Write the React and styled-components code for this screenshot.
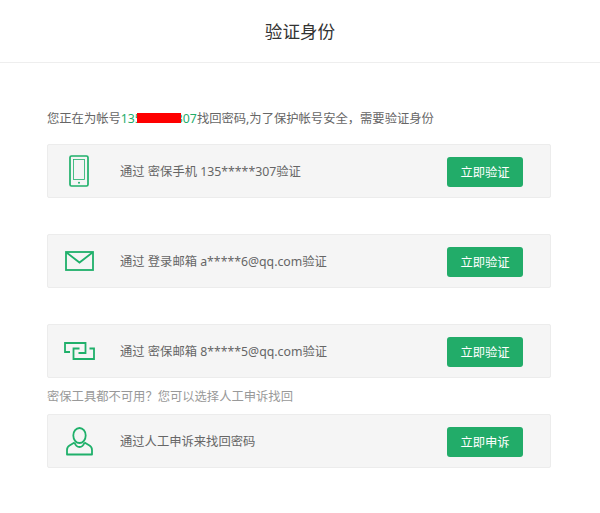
import React from 'react'
import styled, { createGlobalStyle } from 'styled-components'

const GREEN = '#22ac69'
const ICON_GREEN = '#1fb06a'

const GlobalStyle = createGlobalStyle`
  html, body {
    margin: 0;
    padding: 0;
    background: #fff;
    font-family: "Noto Sans", "Noto Sans CJK SC", sans-serif;
  }
`

const PhoneIcon = () => (
  <svg width="20" height="32" viewBox="0 0 20 32" fill="none" stroke={ICON_GREEN}>
    <rect x="1" y="1" width="18" height="30" rx="1.5" strokeWidth="1.7" />
    <rect x="4.500" y="4.500" width="11" height="20" strokeWidth="0.8" />
    <circle cx="10" cy="27.800" r="1" fill={ICON_GREEN} stroke="none" />
  </svg>
)

const MailIcon = () => (
  <svg width="29" height="20" viewBox="0 0 29 20" fill="none" stroke={ICON_GREEN} strokeWidth="1.8">
    <rect x="1" y="1" width="27" height="18" />
    <path d="M1.500 1.500l13 10 13-10" />
  </svg>
)

const LinkIcon = () => (
  <svg width="31" height="18" viewBox="0 0 31 18" fill="none" stroke={ICON_GREEN} strokeWidth="1.8">
    <path d="M6 10H1V1h20.500v10h-7" />
    <path d="M15.500 6.500h-6V17H30V6.500h-4.500" />
  </svg>
)

const PersonIcon = () => (
  <svg width="27" height="29" viewBox="0 0 27 29" fill="none" stroke={ICON_GREEN} strokeWidth="1.8" strokeLinejoin="round">
    <ellipse cx="13.500" cy="8.500" rx="6.200" ry="7.500" />
    <path d="M8.500 15.500L3.500 18.500C1.800 19.500 1 21 1 23v4.500h25V23c0-2-.8-3.500-2.500-4.500l-5-3" />
    <path d="M8.500 15.500c1 3 2.500 4.500 5 4.500s4-1.500 5-4.500" />
  </svg>
)

const rows = [
  { icon: <PhoneIcon />, text: '通过 密保手机 135*****307验证', action: '立即验证' },
  { icon: <MailIcon />, text: '通过 登录邮箱 a*****6@qq.com验证', action: '立即验证' },
  { icon: <LinkIcon />, text: '通过 密保邮箱 8*****5@qq.com验证', action: '立即验证' },
]

export default function App() {
  return (
    <Page>
      <GlobalStyle />
      <Header>验证身份</Header>
      <Main>
        <Intro>
          您正在为帐号
          <Account>
            135*****307
            <Redaction />
          </Account>
          找回密码,为了保护帐号安全，需要验证身份
        </Intro>
        {rows.map((row, i) => (
          <Card key={i} $spaced={i < rows.length - 1}>
            <IconSlot>{row.icon}</IconSlot>
            <Label>{row.text}</Label>
            <ActionButton>{row.action}</ActionButton>
          </Card>
        ))}
        <Hint>密保工具都不可用？您可以选择人工申诉找回</Hint>
        <Card>
          <IconSlot><PersonIcon /></IconSlot>
          <Label>通过人工申诉来找回密码</Label>
          <ActionButton>立即申诉</ActionButton>
        </Card>
      </Main>
    </Page>
  )
}

const Page = styled.div`
  width: 600px;
  height: 513px;
  overflow: hidden;
  background: #fff;
`

const Header = styled.div`
  height: 62px;
  line-height: 62px;
  text-align: center;
  font-size: 17.6px;
  color: #333;
  border-bottom: 1px solid #eee;
`

const Main = styled.div`
  padding: 47px 49px 0 47px;
`

const Intro = styled.div`
  height: 17px;
  line-height: 17px;
  margin-bottom: 17px;
  font-size: 12.3px;
  color: #666;
  white-space: nowrap;
`

const Account = styled.span`
  position: relative;
  color: ${GREEN};
`

const Redaction = styled.span`
  position: absolute;
  left: 16px;
  top: 3px;
  width: 44px;
  height: 10px;
  background: #fe0000;
`

const Card = styled.div`
  display: flex;
  align-items: center;
  height: 52px;
  margin-bottom: ${props => (props.$spaced ? '36px' : '0')};
  padding-right: 27px;
  background: #f5f5f5;
  border: 1px solid #ececec;
  border-radius: 2px;
`

const IconSlot = styled.div`
  display: flex;
  justify-content: center;
  align-items: center;
  width: 62px;
`

const Label = styled.div`
  flex: 1;
  margin-left: 10px;
  font-size: 12.3px;
  color: #666;
  white-space: nowrap;
`

const ActionButton = styled.div`
  display: flex;
  justify-content: center;
  align-items: center;
  width: 76px;
  height: 30px;
  margin-top: 1px;
  font-size: 12.3px;
  color: #fff;
  background: ${GREEN};
  border-radius: 3px;
`

const Hint = styled.div`
  height: 35px;
  padding-top: 1px;
  line-height: 35px;
  font-size: 12.3px;
  color: #999;
  white-space: nowrap;
`
